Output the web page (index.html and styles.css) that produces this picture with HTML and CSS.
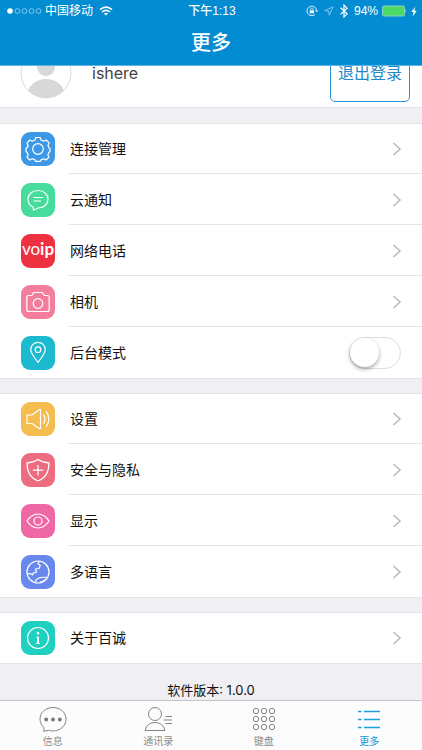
FILE: index.html
```
<!DOCTYPE html>
<html lang="zh-CN">
<head>
    <meta charset="UTF-8">
    <meta name="viewport" content="width=device-width, initial-scale=1.0">
    <title>更多</title>
    <link rel="stylesheet" href="styles.css">
</head>
<body>
    <header class="header">
        <div class="status">
            <div class="status-left">
                <svg class="signal" width="35" height="8" viewBox="0 0 35 8">
                    <circle cx="3" cy="4" r="2.8" fill="#fff"/>
                    <g fill="none" stroke="#9bd3f3" stroke-width=".8">
                        <circle cx="10.5" cy="4" r="2.4"/>
                        <circle cx="17.5" cy="4" r="2.4"/>
                        <circle cx="24.5" cy="4" r="2.4"/>
                        <circle cx="31.5" cy="4" r="2.4"/>
                    </g>
                </svg>
                <span>中国移动</span>
                <svg class="wifi" width="14" height="10" viewBox="0 0 14 10" fill="none" stroke="#fff" stroke-width="1.6">
                    <path d="M1 3.7Q7-1.5 13 3.7M3.1 6Q7 2.6 10.9 6"/>
                    <path d="M7 9.6 4.9 7.5Q7 5.8 9.1 7.5z" fill="#fff" stroke="none"/>
                </svg>
            </div>
            <span class="time">下午1:13</span>
            <div class="status-right">
                <svg width="12" height="12" viewBox="0 0 12 12" fill="none" stroke="#d9effb">
                    <path d="M10.6 5.6A4.8 4.8 0 1 0 9 9.5M9.2 5.3l1.5 1.6 1.2-1.6"/>
                    <path d="M4.7 5.5V4.2a1.2 1.2 0 0 1 2.4 0v1.3" stroke-width=".8"/>
                    <path d="M3.8 5.3h4.2v3H3.8z" fill="#fff" stroke="none"/>
                </svg>
                <svg class="location" width="10" height="10" viewBox="0 0 10 10" fill="none" stroke="#8acbf0" stroke-width=".9">
                    <path d="M9.2.8.8 4.7l3.9.5.5 4z"/>
                </svg>
                <svg class="bluetooth" width="8" height="14" viewBox="0 0 8 14" fill="none" stroke="#fff" stroke-width="1.2">
                    <path d="m.6 3.8 6.5 6L4 12.9V1.1l3.1 3.1-6.5 6"/>
                </svg>
                <span>94%</span>
                <svg width="25" height="12" viewBox="0 0 25 12">
                    <rect x=".5" y="1" width="22" height="10" rx="1.5" fill="#4cd964" stroke="#8bd5c5"/>
                    <path d="M23.5 4.3q1.5 1.7 0 3.4z" fill="#d9effb"/>
                </svg>
                <svg width="6" height="11" viewBox="0 0 6 11" fill="#fff">
                    <path d="M4.2.5.3 6h2.2l-.8 4.5L5.7 4.7H3.3z"/>
                </svg>
            </div>
        </div>
        <h1 class="title">更多</h1>
    </header>

    <main class="content">
        <section class="profile">
            <svg class="avatar" width="52" height="52" viewBox="0 0 52 52">
                <clipPath id="face"><circle cx="26" cy="26" r="25"/></clipPath>
                <circle cx="26" cy="26" r="25" fill="#fff" stroke="#dcdcdc"/>
                <g fill="#d8d8d8" clip-path="url(#face)">
                    <circle cx="26" cy="20" r="9"/>
                    <ellipse cx="26" cy="49" rx="19" ry="17"/>
                </g>
            </svg>
            <span class="name">ishere</span>
            <button class="logout" type="button">退出登录</button>
        </section>

        <nav class="group">
            <a class="row" href="#">
                <svg class="icon" viewBox="0 0 34 34">
                    <rect width="34" height="34" rx="9" fill="#3d99e6"/>
                    <circle cx="17" cy="17" r="5.3"/>
                    <path d="M14.8 5.500h4.400l.7 2.500q1.600.4 2.800 1.200l2.500-1.200 2.900 2.900-1.200 2.500q.8 1.200 1.100 2.500l1 .4v3.400l-1.100.5q-.4 1.300-1.100 2.500l1.200 2.400-2.900 2.900-2.500-1.200q-1.200.7-2.700 1.100l-.7 1.500h-4.400l-.7-1.500q-1.500-.4-2.700-1.100l-2.500 1.200L6 25.200l1.200-2.400q-.7-1.200-1.100-2.500L5 19.700v-3.400l1.100-.4q.3-1.300 1.100-2.500L6 10.900 8.900 8l2.500 1.200q1.200-.8 2.700-1.200z"/>
                </svg>
                <span class="label">连接管理</span>
                <svg class="arrow" viewBox="0 0 10 14"><path d="m1.5 1 6.5 6-6.5 6"/></svg>
            </a>
            <a class="row" href="#">
                <svg class="icon" viewBox="0 0 34 34">
                    <rect width="34" height="34" rx="9" fill="#46dc9b"/>
                    <path d="M12 24C8.700 22.500 7 19.500 7 16.200 7 11.300 11.300 7.500 17 7.500s10 3.800 10 8.700S22.700 25 17 25q-1.700 1.500-4.800 2 .8-1.500-.2-3zM12.500 14.500h9.500M12.500 18h7.500"/>
                </svg>
                <span class="label">云通知</span>
                <svg class="arrow" viewBox="0 0 10 14"><path d="m1.5 1 6.5 6-6.5 6"/></svg>
            </a>
            <a class="row" href="#">
                <span class="icon voip">vo<b>ip</b></span>
                <span class="label">网络电话</span>
                <svg class="arrow" viewBox="0 0 10 14"><path d="m1.5 1 6.5 6-6.5 6"/></svg>
            </a>
            <a class="row" href="#">
                <svg class="icon" viewBox="0 0 34 34">
                    <rect width="34" height="34" rx="9" fill="#f47d9d"/>
                    <path d="M7.800 10.500h3l1.700-3h9l1.700 3h3q2 0 2 2v12q0 2-2 2H7.800q-2 0-2-2v-12q0-2 2-2z"/>
                    <circle cx="17" cy="18.500" r="4.800"/>
                </svg>
                <span class="label">相机</span>
                <svg class="arrow" viewBox="0 0 10 14"><path d="m1.5 1 6.5 6-6.5 6"/></svg>
            </a>
            <label class="row">
                <svg class="icon" viewBox="0 0 34 34">
                    <rect width="34" height="34" rx="9" fill="#1bbace"/>
                    <path d="M17 26.500C13 20.800 9.800 17.500 9.800 13.500a7.200 7.200 0 0 1 14.400 0C24.200 17.500 21 20.800 17 26.500z"/>
                    <circle cx="17" cy="13.700" r="2.800"/>
                </svg>
                <span class="label">后台模式</span>
                <input class="switch" type="checkbox">
            </label>
        </nav>

        <nav class="group">
            <a class="row" href="#">
                <svg class="icon" viewBox="0 0 34 34">
                    <rect width="34" height="34" rx="9" fill="#f5bc50"/>
                    <path d="M6 13h5l7.500-5.500q1-.6 1 .6v18q0 1.200-1 .6L11 21.500H6zM22.500 12.500q3 4.600 0 9.200M25 9.200q5.600 7.800 0 15.600"/>
                </svg>
                <span class="label">设置</span>
                <svg class="arrow" viewBox="0 0 10 14"><path d="m1.5 1 6.5 6-6.5 6"/></svg>
            </a>
            <a class="row" href="#">
                <svg class="icon" viewBox="0 0 34 34">
                    <rect width="34" height="34" rx="9" fill="#ed6c7f"/>
                    <path d="M17 6.500Q22 9.800 28 9.800C28 18.500 25 25 17 28 9 25 6 18.500 6 9.800q6 0 11-3.300zM17 12v10.400M11.800 17.200h10.400"/>
                </svg>
                <span class="label">安全与隐私</span>
                <svg class="arrow" viewBox="0 0 10 14"><path d="m1.5 1 6.5 6-6.5 6"/></svg>
            </a>
            <a class="row" href="#">
                <svg class="icon" viewBox="0 0 34 34">
                    <rect width="34" height="34" rx="9" fill="#f067a6"/>
                    <path d="M6 17Q10.500 10 17 10t11 7q-4.500 7-11 7T6 17z"/>
                    <circle cx="17" cy="17" r="4"/>
                </svg>
                <span class="label">显示</span>
                <svg class="arrow" viewBox="0 0 10 14"><path d="m1.5 1 6.5 6-6.5 6"/></svg>
            </a>
            <a class="row" href="#">
                <svg class="icon" viewBox="0 0 34 34">
                    <rect width="34" height="34" rx="9" fill="#6888ee"/>
                    <circle cx="17" cy="17" r="11"/>
                    <path d="m18.500 6.200-1.500 2.300 2.300 2-1.300 3-3.500.5.800 3.500-2.800.3-1 2.200-2.300-1.500-3 .3M14.500 27.500q0-3.500 3.500-4.500t7.500-.7M19 27q3.500 0 5-2.500"/>
                </svg>
                <span class="label">多语言</span>
                <svg class="arrow" viewBox="0 0 10 14"><path d="m1.5 1 6.5 6-6.5 6"/></svg>
            </a>
        </nav>

        <nav class="group">
            <a class="row" href="#">
                <svg class="icon" viewBox="0 0 34 34">
                    <rect width="34" height="34" rx="9" fill="#1dd0c0"/>
                    <circle cx="17" cy="17" r="10.500"/>
                    <circle cx="17" cy="12.200" r=".8" fill="#fff"/>
                    <path d="M15.500 16h1.500v6.500M15 22.500h4"/>
                    <path d="M17 16v6" stroke-width="2"/>
                </svg>
                <span class="label">关于百诚</span>
                <svg class="arrow" viewBox="0 0 10 14"><path d="m1.5 1 6.5 6-6.5 6"/></svg>
            </a>
        </nav>

        <p class="version">软件版本: 1.0.0</p>
    </main>

    <nav class="tabs">
        <a class="tab" href="#">
            <svg width="28" height="26" viewBox="0 0 28 26">
                <path d="M4.800 21.500C2.500 19.500 1 16.500 1 13.200 1 6.500 6.800 1.500 14 1.500s13 5 13 11.700S21.200 25 14 25q-2.500 0-4.500-.7L4.500 25.300q.8-2 .3-3.800z"/>
                <g fill="#777" stroke="none">
                    <circle cx="7.200" cy="13.500" r="1.900"/>
                    <circle cx="14" cy="13.500" r="1.900"/>
                    <circle cx="20.800" cy="13.500" r="1.900"/>
                </g>
            </svg>
            <span>信息</span>
        </a>
        <a class="tab" href="#">
            <svg width="28" height="26" viewBox="0 0 28 26">
                <circle cx="11" cy="8" r="6.500"/>
                <path d="M1 24.500Q3 16.500 11 16.500t10 8zM21.500 10.500H28M19.500 14H28M21.500 17.500H28"/>
            </svg>
            <span>通讯录</span>
        </a>
        <a class="tab" href="#">
            <svg width="28" height="26" viewBox="0 0 28 26">
                <circle cx="6" cy="5" r="2.700"/><circle cx="14" cy="5" r="2.700"/><circle cx="22" cy="5" r="2.700"/>
                <circle cx="6" cy="13" r="2.700"/><circle cx="14" cy="13" r="2.700"/><circle cx="22" cy="13" r="2.700"/>
                <circle cx="6" cy="21" r="2.700"/><circle cx="14" cy="21" r="2.700"/><circle cx="22" cy="21" r="2.700"/>
            </svg>
            <span>键盘</span>
        </a>
        <a class="tab active" href="#">
            <svg width="28" height="26" viewBox="0 0 28 26">
                <path d="M3 5.500h3.500M9 5.500h16M3 13.500h3.500M9 13.500h16M3 21.500h3.500M9 21.500h16"/>
            </svg>
            <span>更多</span>
        </a>
    </nav>
</body>
</html>
```

FILE: styles.css
```
:root {
    --blue: #048cd2;
    --bg: #efeff4;
    --line: #e4e4e7;
}

* {
    box-sizing: border-box;
}

body {
    margin: 0;
    height: 100vh;
    display: flex;
    flex-direction: column;
    overflow: hidden;
    background: var(--bg);
    color: #111;
    font-family: Inter, "Noto Sans CJK SC", sans-serif;
    font-size: 14px;
}

a {
    color: inherit;
    text-decoration: none;
}

.header {
    flex: none;
    position: relative;
    z-index: 1;
    height: 66px;
    background: var(--blue);
    border-bottom: 1px solid #5cb6e6;
    color: #fff;
}

.status {
    display: grid;
    grid-template-columns: 1fr auto 1fr;
    align-items: center;
    height: 20px;
    padding: 2px 5px 0 7px;
    font-family: "Liberation Sans", "Noto Sans CJK SC", sans-serif;
    font-size: 12px;
    line-height: 18px;
}

.status-left,
.status-right {
    display: flex;
    align-items: center;
}

.status-left {
    gap: 3px;
}

.wifi {
    margin-left: 3px;
}

.time {
    font-weight: 500;
}

.status-right {
    justify-content: flex-end;
    gap: 4px;
}

.location,
.bluetooth {
    margin-left: 2px;
}

.bluetooth {
    margin-right: 2px;
}

.title {
    margin: 0;
    font-size: 20px;
    font-weight: 500;
    line-height: 46px;
    text-align: center;
}

.content {
    flex: 1;
    min-height: 0;
    overflow: hidden;
}

/* the list is scrolled a little, so the profile starts under the header */
.profile {
    display: flex;
    align-items: center;
    height: 70px;
    margin-top: -28px;
    padding: 0 12px 0 20px;
    background: #fff;
    border-bottom: 1px solid var(--line);
}

.name {
    flex: 1;
    margin-left: 20px;
    color: #444;
    font-size: 16px;
    line-height: 24px;
}

.logout {
    width: 80px;
    height: 58px;
    padding: 0 0 2px;
    background: #fff;
    border: 1px solid #2d95d3;
    border-radius: 5px;
    color: #2488c9;
    font-family: inherit;
    font-size: 16px;
}

.group {
    margin-top: 15px;
    background: #fff;
    box-shadow: inset 0 1px var(--line), 0 1px var(--line);
}

.row {
    display: flex;
    align-items: center;
    height: 51px;
    padding-left: 21px;
}

.row:not(:last-child) {
    background: linear-gradient(var(--line), var(--line)) 69px 100% / 100% 1px no-repeat;
}

.icon {
    flex: none;
    width: 34px;
    height: 34px;
    fill: none;
    stroke: #fff;
    stroke-width: 1.2;
    stroke-linejoin: round;
}

.icon rect {
    stroke: none;
}

.voip {
    border-radius: 9px;
    background: #ee3141;
    color: #fff;
    font-family: Lato, sans-serif;
    font-size: 17px;
    line-height: 30px;
    text-align: center;
}

.label {
    flex: 1;
    margin-left: 15px;
    line-height: 20px;
}

.row .arrow {
    width: 10px;
    height: 14px;
    margin-right: 20px;
    fill: none;
    stroke: #bbbbc0;
    stroke-width: 1.6;
}

.switch {
    appearance: none;
    width: 52px;
    height: 32px;
    margin: 0 21px 0 0;
    border: 1px solid #dedede;
    border-radius: 16px;
    background: #fff;
}

.switch::before {
    content: "";
    display: block;
    width: 29px;
    height: 29px;
    border-radius: 50%;
    background: #fff;
    box-shadow: 0 2px 4px rgba(0, 0, 0, 0.35);
}

.switch:checked {
    background: #4cd964;
}

.switch:checked::before {
    margin-left: 21px;
}

.version {
    margin: 17px 0 0;
    font-size: 13px;
    line-height: 20px;
    text-align: center;
}

.tabs {
    flex: none;
    display: flex;
    height: 50px;
    padding-top: 5px;
    background: #fcfcfc;
    border-top: 1px solid #c4c4c8;
}

.tab {
    flex: 1;
    display: flex;
    flex-direction: column;
    align-items: center;
    color: #8c8c8c;
    font-size: 10px;
    line-height: 18px;
}

.tab svg {
    flex: none;
    fill: none;
    stroke: #858585;
    stroke-width: 1;
}

.tab.active {
    color: #1296db;
}

.tab.active svg {
    stroke: #1ba0df;
    stroke-width: 1.3;
}
```
